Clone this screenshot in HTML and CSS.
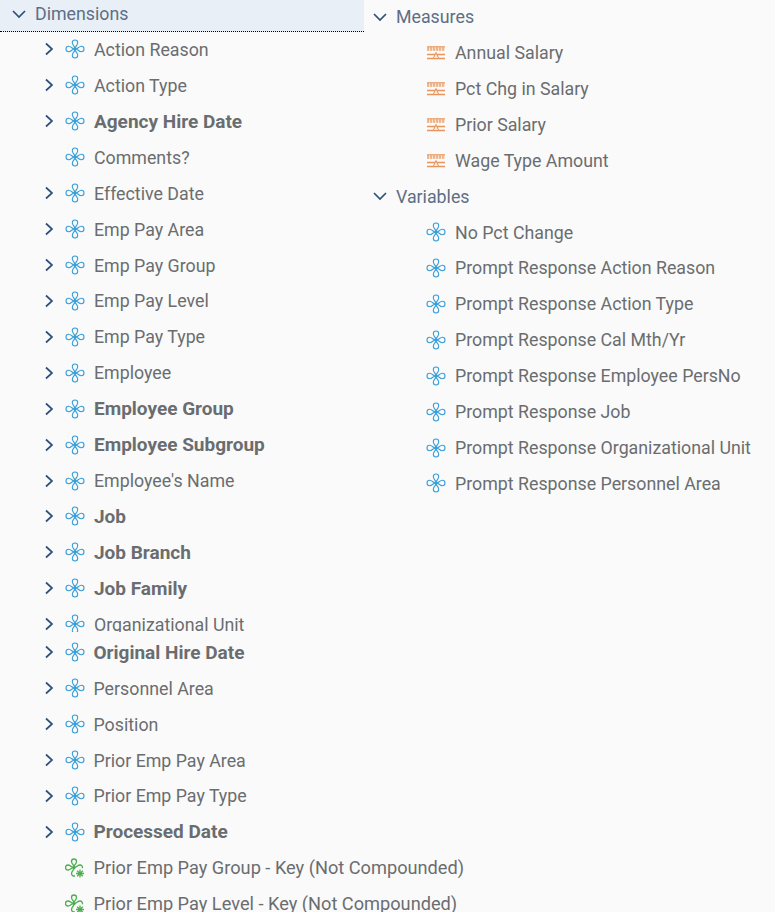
FILE: index.html
```html
<!DOCTYPE html>
<html lang="en">
<head>
    <meta charset="UTF-8">
    <meta name="viewport" content="width=device-width, initial-scale=1.0">
    <title>Fields</title>
    <link rel="stylesheet" href="styles.css">
</head>
<body>
    <!-- shared icons -->
    <svg class="defs" width="0" height="0">
        <symbol id="chev-right" viewBox="0 0 12 16"><path d="M3 2.500l6 5.500-6 5.500" fill="none" stroke="currentColor" stroke-width="1.700"/></symbol>
        <symbol id="chev-down" viewBox="0 0 16 12"><path d="M2 3l6 6 6-6" fill="none" stroke="currentColor" stroke-width="1.700"/></symbol>
        <symbol id="dim" viewBox="0 0 20 20">
            <g fill="none" stroke="#3a9fd8" stroke-width="1.100">
                <path d="M10 9C9.300 7 7.300 5.800 7.300 3.700a2.700 2.700 0 0 1 5.400 0C12.700 5.800 10.700 7 10 9z"/>
                <path d="M10 11c-.7 2-2.700 3.200-2.700 5.300a2.700 2.700 0 0 0 5.400 0C12.700 14.200 10.700 13 10 11z"/>
                <path d="M9 10C7 9.300 5.800 7.300 3.700 7.300a2.700 2.700 0 0 0 0 5.400C5.800 12.700 7 10.700 9 10z"/>
                <path d="M11 10c2-.7 3.200-2.700 5.300-2.700a2.700 2.700 0 0 1 0 5.400C14.200 12.700 13 10.700 11 10z"/>
            </g>
            <circle cx="10" cy="10" r="1.700" fill="#3a9fd8"/>
        </symbol>
        <symbol id="dim-key" viewBox="0 0 20 20">
            <g fill="none" stroke="#4cae4f" stroke-width="1.300">
                <path d="M9 8.500C8.300 6.600 6.500 5.500 6.500 3.500a2.500 2.500 0 0 1 5 0C11.500 5.500 9.700 6.600 9 8.500z"/>
                <path d="M9 10.500c-.7 1.900-2.500 3-2.500 5a2.500 2.500 0 0 0 3.500 2.300"/>
                <path d="M8 9.500C6.100 8.800 5 7 3 7a2.500 2.500 0 0 0 0 5C5 12 6.100 10.200 8 9.500z"/>
                <path d="M10 9.500c1.900-.7 3-2.500 5-2.500a2.500 2.500 0 0 1 2.400 3.300"/>
            </g>
            <circle cx="9" cy="9.500" r="1.700" fill="#4cae4f"/>
            <path d="M15 11.500v8M11 15.500h8M12.200 12.700l5.600 5.600M17.800 12.700l-5.600 5.600" stroke="#4cae4f" stroke-width="1.300"/>
        </symbol>
        <symbol id="measure" viewBox="0 0 20 14">
            <path d="M1 1h18v3.500H1z" fill="#f8e0cb"/>
            <path d="M1 .8h18M2 1v4M5 1v4M8 1v4M11 1v4M14 1v4M17 1v4" fill="none" stroke="#e8945c" stroke-width="1.100"/>
            <path d="M1 8.500h18M1 12.500h18" fill="none" stroke="#e8945c" stroke-width="1.300"/>
            <path d="M10 6.500l2.800 6H7.200z" fill="#fbe6cf" stroke="#e8945c"/>
        </symbol>
    </svg>

    <div class="page">
        <div class="col-left">
            <div class="pane-top">
                <div class="head head-active">
                    <svg class="chev-down"><use href="#chev-down"/></svg>
                    <span>Dimensions</span>
                </div>
                <ul class="tree">
                    <li><svg class="chev"><use href="#chev-right"/></svg><svg class="ico"><use href="#dim"/></svg>Action Reason</li>
                    <li><svg class="chev"><use href="#chev-right"/></svg><svg class="ico"><use href="#dim"/></svg>Action Type</li>
                    <li class="bold"><svg class="chev"><use href="#chev-right"/></svg><svg class="ico"><use href="#dim"/></svg>Agency Hire Date</li>
                    <li class="leaf"><svg class="ico"><use href="#dim"/></svg>Comments?</li>
                    <li><svg class="chev"><use href="#chev-right"/></svg><svg class="ico"><use href="#dim"/></svg>Effective Date</li>
                    <li><svg class="chev"><use href="#chev-right"/></svg><svg class="ico"><use href="#dim"/></svg>Emp Pay Area</li>
                    <li><svg class="chev"><use href="#chev-right"/></svg><svg class="ico"><use href="#dim"/></svg>Emp Pay Group</li>
                    <li><svg class="chev"><use href="#chev-right"/></svg><svg class="ico"><use href="#dim"/></svg>Emp Pay Level</li>
                    <li><svg class="chev"><use href="#chev-right"/></svg><svg class="ico"><use href="#dim"/></svg>Emp Pay Type</li>
                    <li><svg class="chev"><use href="#chev-right"/></svg><svg class="ico"><use href="#dim"/></svg>Employee</li>
                    <li class="bold"><svg class="chev"><use href="#chev-right"/></svg><svg class="ico"><use href="#dim"/></svg>Employee Group</li>
                    <li class="bold"><svg class="chev"><use href="#chev-right"/></svg><svg class="ico"><use href="#dim"/></svg>Employee Subgroup</li>
                    <li><svg class="chev"><use href="#chev-right"/></svg><svg class="ico"><use href="#dim"/></svg>Employee's Name</li>
                    <li class="bold"><svg class="chev"><use href="#chev-right"/></svg><svg class="ico"><use href="#dim"/></svg>Job</li>
                    <li class="bold"><svg class="chev"><use href="#chev-right"/></svg><svg class="ico"><use href="#dim"/></svg>Job Branch</li>
                    <li class="bold"><svg class="chev"><use href="#chev-right"/></svg><svg class="ico"><use href="#dim"/></svg>Job Family</li>
                    <li><svg class="chev"><use href="#chev-right"/></svg><svg class="ico"><use href="#dim"/></svg>Organizational Unit</li>
                </ul>
            </div>
            <ul class="tree pane-bottom">
                <li class="bold"><svg class="chev"><use href="#chev-right"/></svg><svg class="ico"><use href="#dim"/></svg>Original Hire Date</li>
                <li><svg class="chev"><use href="#chev-right"/></svg><svg class="ico"><use href="#dim"/></svg>Personnel Area</li>
                <li><svg class="chev"><use href="#chev-right"/></svg><svg class="ico"><use href="#dim"/></svg>Position</li>
                <li><svg class="chev"><use href="#chev-right"/></svg><svg class="ico"><use href="#dim"/></svg>Prior Emp Pay Area</li>
                <li><svg class="chev"><use href="#chev-right"/></svg><svg class="ico"><use href="#dim"/></svg>Prior Emp Pay Type</li>
                <li class="bold"><svg class="chev"><use href="#chev-right"/></svg><svg class="ico"><use href="#dim"/></svg>Processed Date</li>
                <li class="leaf key"><svg class="ico"><use href="#dim-key"/></svg>Prior Emp Pay Group - Key (Not Compounded)</li>
                <li class="leaf key"><svg class="ico"><use href="#dim-key"/></svg>Prior Emp Pay Level - Key (Not Compounded)</li>
            </ul>
        </div>

        <div class="col-right">
            <div class="head">
                <svg class="chev-down"><use href="#chev-down"/></svg>
                <span>Measures</span>
            </div>
            <ul class="tree">
                <li class="leaf"><svg class="ico-m"><use href="#measure"/></svg>Annual Salary</li>
                <li class="leaf"><svg class="ico-m"><use href="#measure"/></svg>Pct Chg in Salary</li>
                <li class="leaf"><svg class="ico-m"><use href="#measure"/></svg>Prior Salary</li>
                <li class="leaf"><svg class="ico-m"><use href="#measure"/></svg>Wage Type Amount</li>
            </ul>
            <div class="head head-row">
                <svg class="chev-down"><use href="#chev-down"/></svg>
                <span>Variables</span>
            </div>
            <ul class="tree">
                <li class="leaf"><svg class="ico"><use href="#dim"/></svg>No Pct Change</li>
                <li class="leaf"><svg class="ico"><use href="#dim"/></svg>Prompt Response Action Reason</li>
                <li class="leaf"><svg class="ico"><use href="#dim"/></svg>Prompt Response Action Type</li>
                <li class="leaf"><svg class="ico"><use href="#dim"/></svg>Prompt Response Cal Mth/Yr</li>
                <li class="leaf"><svg class="ico"><use href="#dim"/></svg>Prompt Response Employee PersNo</li>
                <li class="leaf"><svg class="ico"><use href="#dim"/></svg>Prompt Response Job</li>
                <li class="leaf"><svg class="ico"><use href="#dim"/></svg>Prompt Response Organizational Unit</li>
                <li class="leaf"><svg class="ico"><use href="#dim"/></svg>Prompt Response Personnel Area</li>
            </ul>
        </div>
    </div>
</body>
</html>
```
FILE: styles.css
```css
* {
    margin: 0;
    padding: 0;
    box-sizing: border-box;
}

html, body {
    height: 100%;
    overflow: hidden;
}

body {
    background: #fafafa;
    color: #6a6d70;
    font-family: Roboto, sans-serif;
    font-size: 17.800px;
}

.defs {
    position: absolute;
}

.page {
    display: flex;
    height: 912px;
    overflow: hidden;
}

.col-left {
    width: 364px;
    flex-shrink: 0;
}

.col-right {
    flex: 1;
    padding-left: 8px;
    min-width: 0;
}

.pane-top {
    height: 632px;
    overflow: hidden;
}

.pane-top .tree {
    margin-top: -0.480px;
}

.pane-bottom {
    margin-top: 2.300px;
}

.head {
    display: flex;
    align-items: center;
    height: 35px;
    color: #5d6f85;
    padding-bottom: 2px;
}

.head-active {
    height: 32px;
    background: #e9eff7;
    border-bottom: 1px dotted #000;
    padding-left: 11px;
    padding-bottom: 4px;
}

.head-row {
    height: 35.400px;
    padding-bottom: 0;
}

.chev-down {
    width: 16px;
    height: 12px;
    margin-right: 8px;
    color: #2f5179;
    flex-shrink: 0;
}

.tree {
    list-style: none;
}

.tree li {
    display: flex;
    align-items: center;
    height: 35.930px;
    white-space: nowrap;
}

.pane-top .tree li {
    padding-left: 43px;
}

.pane-bottom li {
    padding-left: 42.500px;
}

.pane-top .tree li.leaf {
    padding-left: 65px;
}

.pane-bottom li.leaf {
    padding-left: 64.500px;
}

.col-right li.leaf {
    padding-left: 54px;
}

.tree li.bold {
    font-size: 19px;
    font-weight: 700;
}

.tree li.key {
    font-size: 18.200px;
}

.chev {
    width: 12px;
    height: 16px;
    margin-right: 10px;
    color: #2f5179;
    flex-shrink: 0;
}

.ico {
    width: 20px;
    height: 20px;
    margin-right: 9px;
    flex-shrink: 0;
}

.ico-m {
    width: 20px;
    height: 14px;
    margin-right: 9px;
    flex-shrink: 0;
}
```
